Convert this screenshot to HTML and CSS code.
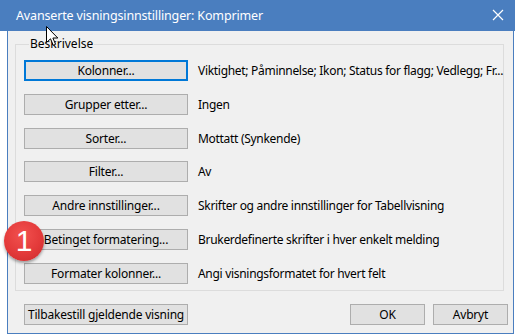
FILE: index.html
```html
<!DOCTYPE html>
<html lang="nb">
<head>
  <meta charset="UTF-8" />
  <title>Avanserte visningsinnstillinger: Komprimer</title>
  <link rel="stylesheet" href="styles.css">
</head>
<body>
  <div class="window">
    <div class="titlebar">
      <span class="title">Avanserte visningsinnstillinger: Komprimer</span>
      <svg class="close" width="12" height="12" viewBox="0 0 12 12">
        <path d="M1 1 L11 11 M11 1 L1 11" stroke="#fff" stroke-width="1.2" fill="none"/>
      </svg>
    </div>
    <div class="client">
      <fieldset class="group">
        <legend>Beskrivelse</legend>
        <div class="rows">
          <div class="row"><button class="btn focus">Kolonner...</button><span class="desc">Viktighet; Påminnelse; Ikon; Status for flagg; Vedlegg; Fr...</span></div>
          <div class="row"><button class="btn">Grupper etter...</button><span class="desc">Ingen</span></div>
          <div class="row"><button class="btn">Sorter...</button><span class="desc">Mottatt (Synkende)</span></div>
          <div class="row"><button class="btn">Filter...</button><span class="desc">Av</span></div>
          <div class="row"><button class="btn">Andre innstillinger...</button><span class="desc">Skrifter og andre innstillinger for Tabellvisning</span></div>
          <div class="row"><button class="btn">Betinget formatering...</button><span class="desc">Brukerdefinerte skrifter i hver enkelt melding</span></div>
          <div class="row"><button class="btn">Formater kolonner...</button><span class="desc">Angi visningsformatet for hvert felt</span></div>
        </div>
      </fieldset>
      <div class="footer">
        <button class="btn">Tilbakestill gjeldende visning</button>
        <div class="actions">
          <button class="btn small">OK</button>
          <button class="btn small">Avbryt</button>
        </div>
      </div>
    </div>

    <div class="badge">1</div>
    <svg class="cursor" width="13" height="21" viewBox="0 0 13 21">
      <path d="M0.5 0.5 L0.5 16.5 L4.5 12.8 L7.3 19.3 L9.6 18.3 L6.9 12 L11.8 12 Z" fill="#fff" stroke="#000" stroke-width="1"/>
    </svg>
  </div>
</body>
</html>
```

FILE: styles.css
```css
:root {
  --accent: #4a7ebf;
  --face: #f0f0f0;
  --btn: #e1e1e1;
  --btn-border: #adadad;
  --focus: #0078d7;
  --text: #000000;
}

* {
  box-sizing: border-box;
}

body {
  margin: 0;
  background: #ffffff;
  font-family: 'Noto Sans', 'Open Sans', sans-serif;
  font-size: 12px;
  color: var(--text);
}

.window {
  position: relative;
  width: 515px;
  height: 334px;
  overflow: hidden;
}

.titlebar {
  height: 31px;
  background: var(--accent);
  color: #ffffff;
  display: flex;
  align-items: center;
  justify-content: space-between;
  padding: 0 10px 1px 16px;
}

.title {
  font-size: 12.5px;
  letter-spacing: -0.15px;
}

.close {
  margin-right: 1px;
}

.client {
  margin-left: 7px;
  width: 507px;
  height: 303px;
  background: var(--face);
  border: 1px solid var(--accent);
  border-top: none;
  padding-top: 5px;
}

.group {
  margin: 0 9px 0 7px;
  padding: 8px 8px 6px 8px;
  border: 1px solid #dcdcdc;
  min-width: 0;
}

.group legend {
  padding: 0 1px;
  margin-left: 5px;
  line-height: 16px;
  font-size: 12px;
}

.rows {
  display: flex;
  flex-direction: column;
  gap: 12.8px;
}

.row {
  display: flex;
  align-items: center;
  gap: 10px;
  height: 21px;
  white-space: nowrap;
}

.btn {
  font-family: inherit;
  font-size: 12px;
  letter-spacing: -0.2px;
  white-space: nowrap;
  color: var(--text);
  background: var(--btn);
  border: 1px solid var(--btn-border);
  border-radius: 0;
  height: 21px;
  width: 164px;
  padding: 0;
  flex: none;
  line-height: 17px;
}

.btn.focus {
  border: 2px solid var(--focus);
}

.btn.small {
  width: 75px;
}

.desc {
  letter-spacing: -0.3px;
}

.footer {
  display: flex;
  justify-content: space-between;
  align-items: center;
  margin-top: 13px;
  padding: 0 5px 0 16px;
}

.actions {
  display: flex;
  gap: 8px;
}

.badge {
  position: absolute;
  left: 4px;
  top: 221px;
  width: 40px;
  height: 40px;
  border-radius: 50%;
  background: radial-gradient(circle at 45% 35%, #f2514f 0%, #e33a3a 55%, #c92a2c 100%);
  box-shadow: 0 2px 3px rgba(0, 0, 0, 0.35);
  color: #ffffff;
  font-family: 'Liberation Sans', Arial, sans-serif;
  font-size: 30px;
  line-height: 40px;
  text-align: center;
}

.cursor {
  position: absolute;
  left: 46px;
  top: 26px;
}
```
